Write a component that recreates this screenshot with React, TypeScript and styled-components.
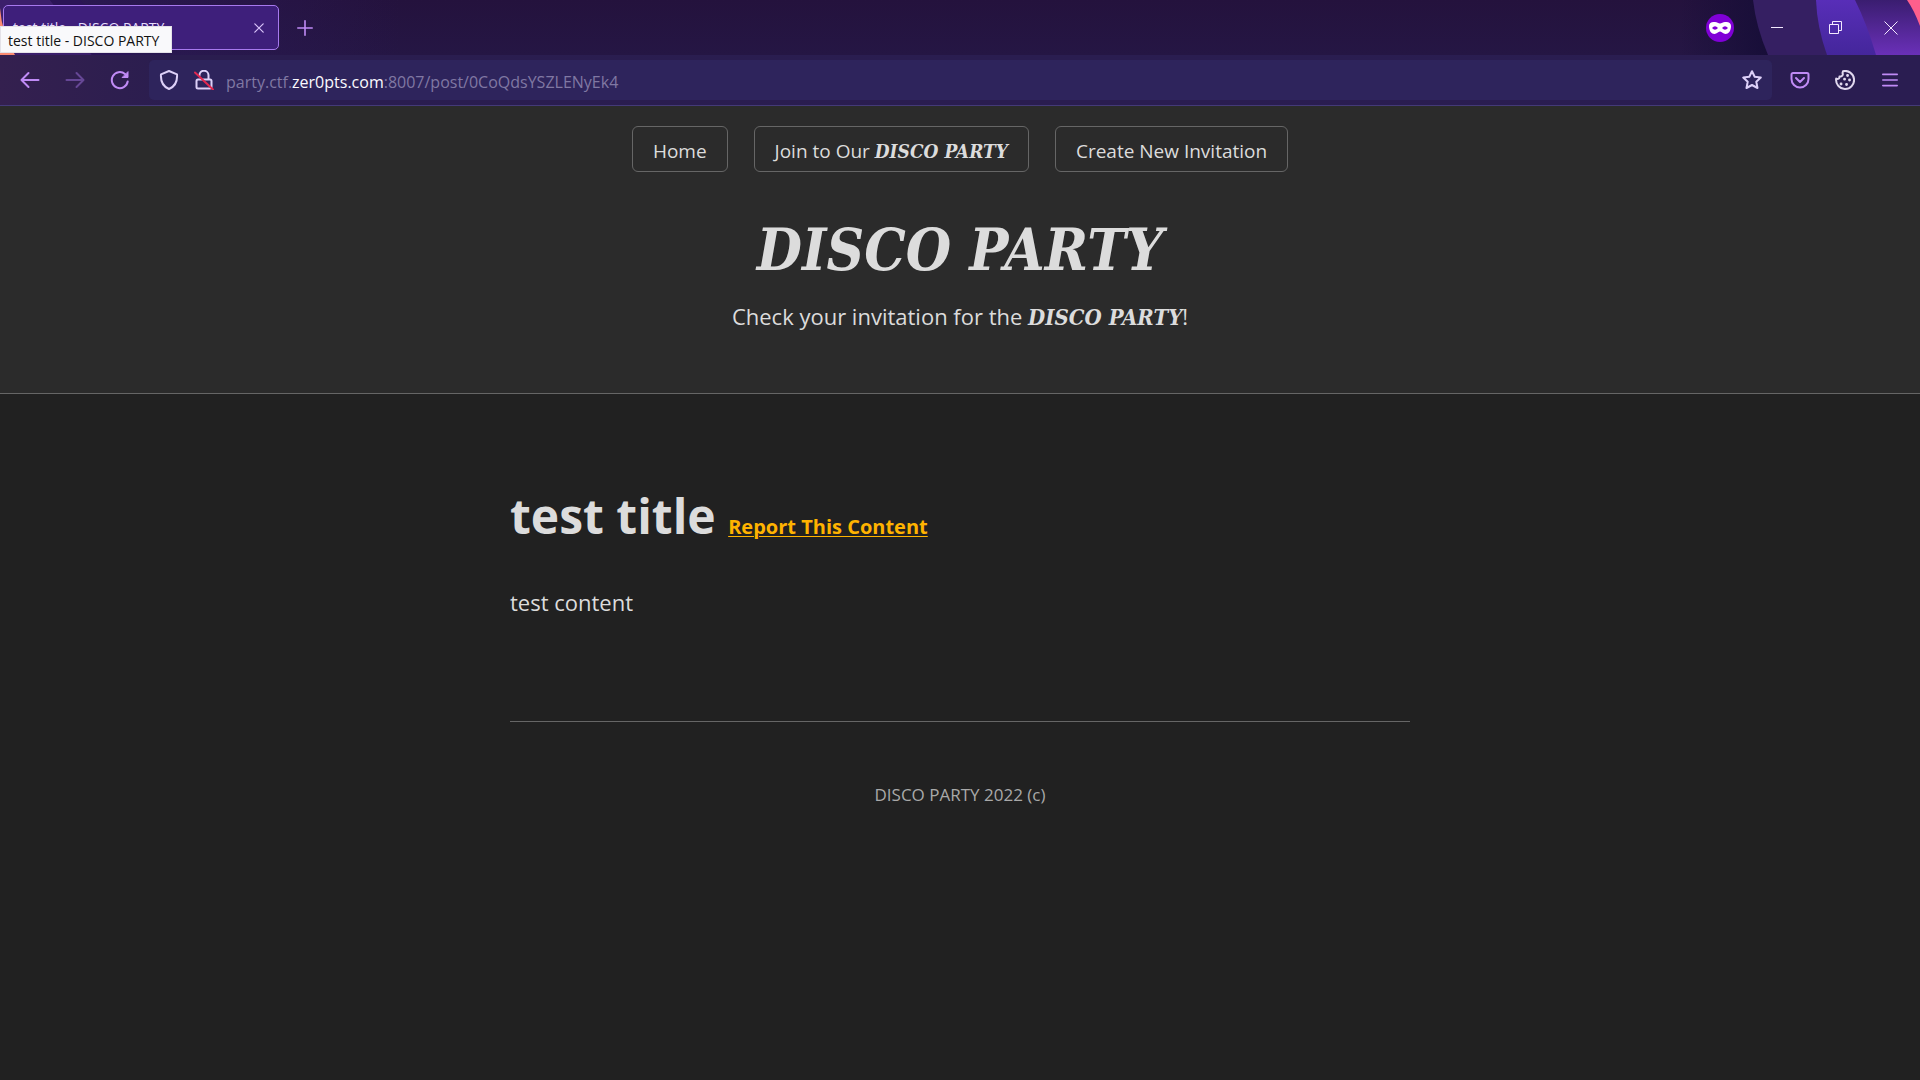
import React from "react";
import styled, { createGlobalStyle } from "styled-components";

const GlobalStyle = createGlobalStyle`
  *, *::before, *::after { box-sizing: border-box; }
  body {
    margin: 0;
    background: #212121;
    color: #dcdcdc;
    font-family: "Open Sans", "Noto Sans", sans-serif;
  }
`;

const TabStrip = styled.div`
  position: relative;
  height: 55px;
  padding: 5px 0 0 3px;
  display: flex;
  align-items: flex-start;
  background: linear-gradient(180deg, #24123d 0, #251644 100%);
`;

const ThemeArt = styled.svg`
  position: absolute;
  top: 0;
  ${(p: { $side: "left" | "right" }) => p.$side}: 0;
  pointer-events: none;
`;

const Tab = styled.div`
  position: relative;
  width: 276px;
  height: 45px;
  padding: 0 8px 0 9px;
  display: flex;
  align-items: center;
  justify-content: space-between;
  border: 1px solid #a779ee;
  border-radius: 5px;
  background: #3e1f7b;
  color: #e6dcfb;
  font-size: 14px;
`;

const ChromeButton = styled.button`
  position: relative;
  display: grid;
  place-items: center;
  flex: none;
  width: ${(p: { $w?: number; $h?: number }) => p.$w ?? 45}px;
  height: ${(p) => p.$h ?? 40}px;
  padding: 0;
  border: 0;
  background: none;
  color: #c08bf6;
`;

const Tooltip = styled.div`
  position: absolute;
  z-index: 2;
  top: 26px;
  left: 0;
  width: 172px;
  height: 27px;
  padding: 0 7px;
  border: 1px solid #e4e2e8;
  background: #f9f9fb;
  color: #111;
  font-size: 14px;
  line-height: 27px;
  white-space: nowrap;
`;

const WindowTools = styled.div`
  position: relative;
  display: flex;
  align-items: center;
  height: 45px;
  margin-left: auto;
  color: #f3e9ff;
  button { color: #f3e9ff; }
`;

const Toolbar = styled.div`
  position: relative;
  height: 51px;
  padding: 0 8px 0 9px;
  display: flex;
  align-items: center;
  border-bottom: 1px solid #443a78;
  background: linear-gradient(90deg, #34204f 0, #2a1d4f 180px, #2a1d51 100%);
`;

const AddressBar = styled.div`
  flex: 1;
  height: 40px;
  margin: 0 5px 0 8px;
  padding: 0 5px 0 4px;
  display: flex;
  align-items: center;
  border-radius: 5px;
  background: #2e245c;
`;

const Address = styled.div`
  flex: 1;
  padding: 3px 0 0 2px;
  color: #8078a3;
  font-size: 16px;
  line-height: 22px;
  b { font-weight: 400; color: #fbfaff; }
`;

const Hero = styled.header`
  padding: 20px 0 60px;
  border-bottom: 1px solid #666;
  background: #2b2b2b;
  text-align: center;
`;

const Nav = styled.nav`
  display: flex;
  justify-content: center;
  gap: 26px;
`;

const NavLink = styled.a`
  height: 46px;
  padding: 0 20px;
  border: 1px solid #666;
  border-radius: 6px;
  color: #dcdcdc;
  font-size: 19px;
  line-height: 48px;
  text-decoration: none;
`;

const Disco = styled.span`
  font-family: "DejaVu Serif Condensed", "DejaVu Serif", serif;
  font-weight: 700;
  font-style: italic;
  line-height: 1;
  font-size: ${(p: { $size: number }) => p.$size}px;
`;

const HeroTitle = styled.h1`
  margin: 48px 0 3px;
  line-height: 76px;
`;

const Tagline = styled.p`
  margin: 0;
  font-size: 22px;
  line-height: 34px;
`;

const Main = styled.main`
  width: min(900px, 90%);
  margin: 0 auto;
  padding-top: 91px;
`;

const PostTitle = styled.h1`
  margin: 0;
  font-size: 48px;
  line-height: 62px;
  a { font-size: 20px; color: #ffb300; text-underline-offset: 2px; text-decoration-thickness: 1px; }
`;

const PostBody = styled.p`
  margin: 27px 0 102px;
  font-size: 22px;
  line-height: 34px;
`;

const Footer = styled.footer`
  width: min(900px, 90%);
  margin: 0 auto;
  padding-top: 59px;
  border-top: 1px solid #666;
  color: #a9a9a9;
  font-size: 17px;
  line-height: 28px;
  text-align: center;
  p { margin: 0; }
`;

const MaskBadge = styled.svg`
  margin-right: 12px;
`;

const Line = ({ size = 20, width = 2, children, color = "currentColor" }: { size?: number; width?: number; color?: string; children: React.ReactNode }) => (
  <svg width={size} height={size} viewBox="0 0 20 20" fill="none" stroke={color} strokeWidth={width} strokeLinecap="round" strokeLinejoin="round" aria-hidden="true">
    {children}
  </svg>
);

export default function App() {
  return (
    <>
      <GlobalStyle />
      <TabStrip>
        <ThemeArt $side="left" width="400" height="55" aria-hidden="true">
          <defs>
            <linearGradient id="glow" x1="0" y1="0" x2="1" y2="0">
              <stop offset="0" stopColor="#2c1a58" />
              <stop offset="1" stopColor="#2c1a58" stopOpacity="0" />
            </linearGradient>
          </defs>
          <rect width="400" height="55" fill="url(#glow)" />
          <path d="M0 0H50L92 55H0Z" fill="#3b1f6b" />
          <path d="M50 0H80L132 55H92Z" fill="#2b1557" />
          <path d="M0 8Q2 34 15 55H0Z" fill="#fb8b72" />
        </ThemeArt>
        <ThemeArt $side="right" width="240" height="55" aria-hidden="true">
          <defs>
            <linearGradient id="band" x1="0" y1="0" x2="0" y2="1">
              <stop offset="0" stopColor="#582eb8" />
              <stop offset="1" stopColor="#44269b" />
            </linearGradient>
            <linearGradient id="edge" x1="0" y1="0" x2="0" y2="1">
              <stop offset="0" stopColor="#3a1d70" />
              <stop offset="1" stopColor="#6a30b8" />
            </linearGradient>
            <linearGradient id="shade" x1="0" y1="0" x2="1" y2="0">
              <stop offset="0" stopColor="#170e38" stopOpacity="0" />
              <stop offset="1" stopColor="#170e38" />
            </linearGradient>
          </defs>
          <rect width="90" height="55" fill="url(#shade)" />
          <path d="M73 0Q76 27 88 55H240V0Z" fill="#351f62" />
          <path d="M136 0Q137 27 147 55H240V0Z" fill="url(#band)" />
          <path d="M175 0Q187 24 196 55H240V0Z" fill="url(#edge)" />
          <path d="M227 0Q234 10 240 26V0Z" fill="#ff5f8c" />
        </ThemeArt>
        <Tab>
          <span>test title - DISCO PARTY</span>
          <ChromeButton $w={22} $h={30} aria-label="Close tab">
            <Line size={12} width={2} color="#d9c4fa"><path d="M3 3l14 14M17 3L3 17" /></Line>
          </ChromeButton>
        </Tab>
        <ChromeButton $w={52} $h={45} aria-label="New tab">
          <Line size={16} width={2}><path d="M10 1v18M1 10h18" /></Line>
        </ChromeButton>
        <WindowTools>
          <MaskBadge width="28" height="28" viewBox="0 0 28 28" role="img" aria-label="Private browsing">
            <circle cx="14" cy="14" r="14" fill="#8000d7" />
            <path fillRule="evenodd" fill="#fff" d="M3 12C3 8.500 6 7.500 9 8C11 8.300 12.500 9.500 14 9.500S17 8.300 19 8C22 7.500 25 8.500 25 12C25 17 22.500 20 19.500 20C17 20 16 17.500 14 17.500S11 20 8.500 20C5.500 20 3 17 3 12ZM6 14Q9 17.500 12 14Q9 10.500 6 14ZM16 14Q19 17.500 22 14Q19 10.500 16 14Z" />
          </MaskBadge>
          <ChromeButton $w={62} aria-label="Minimize">
            <svg width="12" height="12"><path d="M0 5.500H12" stroke="currentColor" /></svg>
          </ChromeButton>
          <ChromeButton $w={54} aria-label="Restore">
            <svg width="13" height="13" fill="none" stroke="currentColor"><path d="M.5 3.500H9.500V12.500H.5ZM3.500 3V.5H12.500V9.500H10" /></svg>
          </ChromeButton>
          <ChromeButton $w={58} aria-label="Close">
            <svg width="14" height="14" stroke="currentColor"><path d="M.5.5l13 13M13.500.5l-13 13" /></svg>
          </ChromeButton>
        </WindowTools>
        <Tooltip role="tooltip">test title - DISCO PARTY</Tooltip>
      </TabStrip>

      <Toolbar>
        <ChromeButton $w={42} aria-label="Back">
          <Line><path d="M18.500 10H2M8.500 3L1.500 10L8.500 17" /></Line>
        </ChromeButton>
        <ChromeButton $w={48} aria-label="Forward">
          <Line color="#664796"><path d="M1.500 10H18M11.500 3l7 7-7 7" /></Line>
        </ChromeButton>
        <ChromeButton $w={42} aria-label="Reload">
          <Line>
            <path d="M17.700 11.500A8 8 0 1 1 15 4" />
            <path d="M18 2v5.500h-5.500z" fill="currentColor" strokeWidth="1" />
          </Line>
        </ChromeButton>
        <AddressBar>
          <ChromeButton $w={31} aria-label="Tracking protection">
            <Line color="#ddd0f8"><path d="M10 1L18 4.300C18.500 11 16 16.500 10 19C4 16.500 1.500 11 2 4.300Z" /></Line>
          </ChromeButton>
          <ChromeButton $w={40} aria-label="Connection not secure">
            <Line color="#ddd0f8">
              <path d="M4 9.500H16a1.500 1.500 0 0 1 1.500 1.500V17a1.500 1.500 0 0 1-1.500 1.500H4A1.500 1.500 0 0 1 2.500 17V11A1.500 1.500 0 0 1 4 9.500M5.500 5.500a4.500 4.500 0 0 1 9-.5V9" />
              <path d="M1 2.500l18 17" stroke="#e22850" />
            </Line>
          </ChromeButton>
          <Address>party.ctf.<b>zer0pts.com</b>:8007/post/0CoQdsYSZLENyEk4</Address>
          <ChromeButton $w={31} aria-label="Bookmark this page">
            <Line color="#ddd0f8"><path d="M10 1.200l2.700 5.600 6.100.8-4.500 4.200 1.200 6.200L10 15l-5.500 3 1.200-6.200L1.200 7.600l6.100-.8z" /></Line>
          </ChromeButton>
        </AddressBar>
        <ChromeButton aria-label="Save to Pocket">
          <Line><path d="M3 3H17a1.500 1.500 0 0 1 1.500 1.500V9a8.500 8.500 0 0 1-17 0V4.500A1.500 1.500 0 0 1 3 3ZM6 8l4 4 4-4" /></Line>
        </ChromeButton>
        <ChromeButton aria-label="Cookies">
          <Line color="#e0d8ee">
            <path d="M8 1.200A9 9 0 1 1 1.200 8.500C3 9.500 4.800 8.500 4.500 6.500C7 6.800 8.500 5 7.500 3Z" />
            <path d="M12.500 5.500h.1M9.500 9.200h.1M14.500 10h.1M6 14h.1M11.500 14.500h.1" strokeWidth="2.800" />
          </Line>
        </ChromeButton>
        <ChromeButton aria-label="Open menu">
          <Line size={16} width={2}><path d="M1 3h18M1 10h18M1 17h18" /></Line>
        </ChromeButton>
      </Toolbar>

      <Hero>
        <Nav>
          <NavLink href="#home">Home</NavLink>
          <NavLink href="#join">Join to Our <Disco $size={19}>DISCO PARTY</Disco></NavLink>
          <NavLink href="#create">Create New Invitation</NavLink>
        </Nav>
        <HeroTitle><Disco $size={58}>DISCO PARTY</Disco></HeroTitle>
        <Tagline>Check your invitation for the <Disco $size={22}>DISCO PARTY</Disco>!</Tagline>
      </Hero>

      <Main>
        <PostTitle>test title <a href="#report">Report This Content</a></PostTitle>
        <PostBody>test content</PostBody>
      </Main>
      <Footer><p>DISCO PARTY 2022 (c)</p></Footer>
    </>
  );
}
